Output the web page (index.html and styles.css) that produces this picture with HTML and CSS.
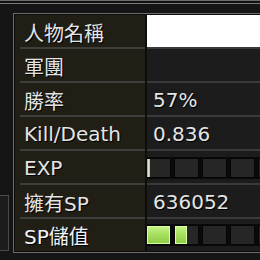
FILE: index.html
```html
<!DOCTYPE html>
<html lang="zh-TW">
<head>
  <meta charset="UTF-8">
  <meta name="viewport" content="width=device-width, initial-scale=1">
  <title>角色資訊</title>
  <link rel="stylesheet" href="styles.css">
</head>
<body>
  <div class="topbar"></div>

  <div class="main">
    <div class="side">
      <div class="side-box"></div>
    </div>

    <div class="panel">
      <div class="row">
        <div class="label">人物名稱</div>
        <div class="value value-input"></div>
      </div>
      <div class="row">
        <div class="label">軍團</div>
        <div class="value"></div>
      </div>
      <div class="row">
        <div class="label">勝率</div>
        <div class="value">57%</div>
      </div>
      <div class="row">
        <div class="label">Kill/Death</div>
        <div class="value">0.836</div>
      </div>
      <div class="row">
        <div class="label">EXP</div>
        <div class="value">
          <div class="bar">
            <span class="seg"><i class="fill fill-exp" style="width: 3px"></i></span>
            <span class="seg"></span>
            <span class="seg"></span>
            <span class="seg"></span>
            <span class="seg"></span>
          </div>
        </div>
      </div>
      <div class="row">
        <div class="label">擁有SP</div>
        <div class="value">636052</div>
      </div>
      <div class="row last">
        <div class="label">SP儲值</div>
        <div class="value">
          <div class="bar">
            <span class="seg"><i class="fill fill-sp" style="width: 100%"></i></span>
            <span class="seg"><i class="fill fill-sp" style="width: 12px"></i></span>
            <span class="seg"></span>
            <span class="seg"></span>
            <span class="seg"></span>
          </div>
        </div>
      </div>
    </div>
  </div>
</body>
</html>
```

FILE: styles.css
```css
body {
  margin: 0;
  width: 260px;
  height: 260px;
  overflow: hidden;
  background: #151515;
  font-family: "DejaVu Sans", "Noto Sans CJK TC", sans-serif;
  font-size: 20px;
  color: #e4e4e4;
}
.topbar {
  height: 13px;
  box-sizing: border-box;
  border-top: 1px solid #6a6a6a;
  box-shadow: inset 0 2px 0 #111, inset 0 3px 0 #7a7a7a;
}
.main {
  display: flex;
}
.side {
  width: 13px;
  flex: none;
  display: flex;
  flex-direction: column;
  justify-content: flex-end;
}
.side-box {
  width: 8px;
  height: 54px;
  margin-bottom: 2px;
  border: 1px solid #4a4a4a;
  border-left: none;
  background: #1c1c1c;
}
.panel {
  flex: 1;
  min-width: 0;
  border: 1px solid #6b6b6b;
  border-right: none;
  padding: 1px 0 1px 1px;
  background: #0d0d0d;
}
.row {
  display: grid;
  grid-template-columns: 130px minmax(0, 1fr);
  column-gap: 2px;
  height: 34px;
}
.row.last {
  height: 32px;
}
.label {
  display: flex;
  align-items: center;
  padding-left: 9px;
  background: linear-gradient(#3d3d3a, #3d3d3a) no-repeat 5px 100% / calc(100% - 5px) 2px, #211e16;
  text-shadow: 1px 1px 0 #000;
  white-space: nowrap;
}
.value {
  display: flex;
  align-items: center;
  padding-left: 6px;
  overflow: hidden;
  background: linear-gradient(#3a3a3a, #3a3a3a) no-repeat 0 100% / 100% 2px, #1c1c1c;
  text-shadow: 1px 1px 0 #000;
}
.last .label,
.last .value {
  background-size: 0 0, auto;
}
.last .label {
  color: #f4f4f4;
}
.value-input {
  background: linear-gradient(#3a3a3a, #3a3a3a) no-repeat 0 100% / 100% 2px, #fff;
}
.bar {
  display: flex;
  gap: 3px;
  margin-left: -8px;
  padding: 1px;
  background: #0a0a0a;
}
.seg {
  position: relative;
  width: 23px;
  height: 18px;
  flex: none;
  border: 1px solid #050505;
  background: #262626;
}
.fill {
  position: absolute;
  left: 0;
  top: 0;
  bottom: 0;
}
.fill-exp {
  background: linear-gradient(90deg, #8c9c80, #e8f4d8 60%, #9cb080);
}
.fill-sp {
  background: linear-gradient(#c8f58a, #a8e060 45%, #8ccc44);
  box-shadow: inset 0 0 0 1px #d8ffa0;
}
```
